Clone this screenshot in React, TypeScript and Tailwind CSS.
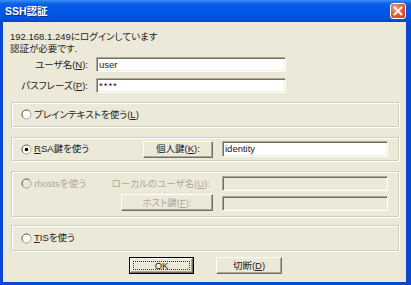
import React from 'react';

const sunken =
  'border border-t-[#ACA899] border-l-[#ACA899] border-r-white border-b-white shadow-[inset_1px_1px_0_#716F64,inset_-1px_-1px_0_#F1EFE2]';
const raised =
  'bg-[#ECE9D8] border border-t-white border-l-white border-r-[#716F64] border-b-[#716F64] shadow-[inset_-1px_-1px_0_#ACA899]';
const groupBox = 'border border-[#D0D0BF] shadow-[inset_1px_1px_0_#FFFFFF,1px_1px_0_#FFFFFF]';

const Radio: React.FC<{ checked?: boolean; disabled?: boolean }> = ({ checked, disabled }) => (
  <svg width="11" height="11" viewBox="0 0 11 11" className="shrink-0">
    <circle cx="5.5" cy="5.5" r="4.5" fill={disabled ? '#ECE9D8' : '#FFFFFF'} stroke="#ACA899" strokeWidth="1" />
    <path d="M2.3 8.7 A4.5 4.5 0 0 1 8.7 2.3" fill="none" stroke="#716F64" strokeWidth="1" />
    {checked && <circle cx="5.5" cy="5.5" r="1.8" fill="#000000" />}
  </svg>
);

export default function App() {
  return (
    <div className="w-[411px] h-[285px] flex flex-col bg-[#0A48D2] text-[9.5px] leading-[12px] text-[#222] font-['Liberation_Sans','Noto_Sans_CJK_JP',sans-serif] [font-feature-settings:'palt'] select-none overflow-hidden">
      {/* title bar */}
      <div className="h-[22px] shrink-0 flex items-center justify-between pl-[5px] pr-[5px] bg-[linear-gradient(to_bottom,#3D8EF8_0%,#0A5FEA_18%,#0056E6_50%,#0052DF_85%,#0A46C8_100%)]">
        <span className="text-white font-bold text-[10.5px] [text-shadow:1px_1px_0_#0A2E8A]">SSH認証</span>
        <div className="w-[16px] h-[16px] rounded-[3px] border border-white bg-[radial-gradient(circle_at_35%_30%,#F6A28A_0%,#E2572F_55%,#C8401E_100%)] flex items-center justify-center">
          <svg width="10" height="10" viewBox="0 0 10 10">
            <path d="M1.5 1.5 L8.5 8.5 M8.5 1.5 L1.5 8.5" stroke="#FFFFFF" strokeWidth="1.8" strokeLinecap="square" />
          </svg>
        </div>
      </div>

      {/* body */}
      <div className="flex-1 ml-[3px] mr-[5px] mb-[3px] bg-[#ECE9D8] flex flex-col">
        <div className="pl-[7px] pt-[9px]">
          <div>192.168.1.249にログインしています</div>
          <div>認証が必要です.</div>
        </div>

        <div className="mt-[2px] flex items-center">
          <span className="w-[85px] text-right">
            ユーザ名(<u>N</u>):
          </span>
          <div className={`ml-[8px] w-[190px] h-[15px] bg-white ${sunken} flex items-center pl-[2px]`}>user</div>
        </div>
        <div className="mt-[6px] flex items-center">
          <span className="w-[85px] text-right">
            パスフレーズ(<u>P</u>):
          </span>
          <div className={`ml-[8px] w-[190px] h-[15px] bg-white ${sunken} flex items-center pl-[2px] tracking-[1px]`}>****</div>
        </div>

        {/* plaintext */}
        <div className={`mt-[9px] ml-[8px] w-[388px] h-[25px] ${groupBox} flex items-center pl-[9px]`}>
          <Radio />
          <span className="ml-[2px]">
            プレインテキストを使う(<u>L</u>)
          </span>
        </div>

        {/* RSA */}
        <div className={`mt-[10px] ml-[8px] w-[388px] h-[24px] ${groupBox} flex items-center pl-[9px]`}>
          <div className="w-[122px] flex items-center">
            <Radio checked />
            <span className="ml-[2px]">
              <u>R</u>SA鍵を使う
            </span>
          </div>
          <div className={`w-[70px] h-[17px] ${raised} flex items-center justify-center`}>
            個人鍵(<u>K</u>):
          </div>
          <div className={`ml-[9px] w-[166px] h-[16px] bg-white ${sunken} flex items-center pl-[2px]`}>identity</div>
        </div>

        {/* rhosts */}
        <div
          className={`mt-[10px] ml-[8px] w-[388px] h-[46px] ${groupBox} pt-[4px] pl-[9px] grid grid-cols-[100px_92px_9px_166px] grid-rows-[15px_17px] gap-y-[3px] text-[#ACA899]`}
        >
          <div className="flex items-center">
            <Radio disabled />
            <span className="ml-[2px]">rhostsを使う</span>
          </div>
          <div className="flex items-center justify-end pr-[3px] whitespace-nowrap">
            ローカルのユーザ名(<u>U</u>):
          </div>
          <div />
          <div className={`${sunken}`} />
          <div />
          <div className={`${raised} flex items-center justify-center`}>
            ホスト鍵(<u>F</u>):
          </div>
          <div />
          <div className={`${sunken} self-end h-[15px]`} />
        </div>

        {/* TIS */}
        <div className={`mt-[8px] ml-[8px] w-[388px] h-[26px] ${groupBox} flex items-center pl-[9px]`}>
          <Radio />
          <span className="ml-[2px]">
            <u>T</u>ISを使う
          </span>
        </div>

        {/* buttons */}
        <div className="mt-[6px] ml-[126px] flex gap-[22px]">
          <div className="w-[65px] h-[17px] border border-black flex">
            <div className={`flex-1 ${raised} flex p-[2px]`}>
              <div className="flex-1 border border-dotted border-[#333] flex items-center justify-center">OK</div>
            </div>
          </div>
          <div className={`w-[66px] h-[17px] ${raised} flex items-center justify-center`}>
            切断(<u>D</u>)
          </div>
        </div>
      </div>
    </div>
  );
}
